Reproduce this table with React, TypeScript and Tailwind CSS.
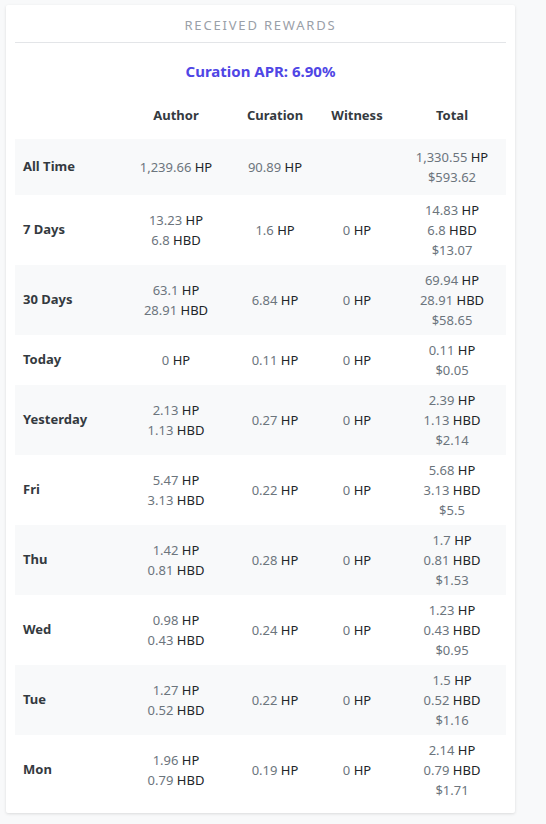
import React from "react";

type Line = { n: string; u?: string };
type Row = { label: string; author: Line[]; curation: Line[]; witness: Line[]; total: Line[]; h?: string };

const hp = (n: string): Line => ({ n, u: "HP" });
const hbd = (n: string): Line => ({ n, u: "HBD" });
const usd = (n: string): Line => ({ n });

const rows: Row[] = [
  { label: "All Time", author: [hp("1,239.66")], curation: [hp("90.89")], witness: [], total: [hp("1,330.55"), usd("$593.62")], h: "h-[56px]" },
  { label: "7 Days", author: [hp("13.23"), hbd("6.8")], curation: [hp("1.6")], witness: [hp("0")], total: [hp("14.83"), hbd("6.8"), usd("$13.07")] },
  { label: "30 Days", author: [hp("63.1"), hbd("28.91")], curation: [hp("6.84")], witness: [hp("0")], total: [hp("69.94"), hbd("28.91"), usd("$58.65")] },
  { label: "Today", author: [hp("0")], curation: [hp("0.11")], witness: [hp("0")], total: [hp("0.11"), usd("$0.05")] },
  { label: "Yesterday", author: [hp("2.13"), hbd("1.13")], curation: [hp("0.27")], witness: [hp("0")], total: [hp("2.39"), hbd("1.13"), usd("$2.14")] },
  { label: "Fri", author: [hp("5.47"), hbd("3.13")], curation: [hp("0.22")], witness: [hp("0")], total: [hp("5.68"), hbd("3.13"), usd("$5.5")] },
  { label: "Thu", author: [hp("1.42"), hbd("0.81")], curation: [hp("0.28")], witness: [hp("0")], total: [hp("1.7"), hbd("0.81"), usd("$1.53")] },
  { label: "Wed", author: [hp("0.98"), hbd("0.43")], curation: [hp("0.24")], witness: [hp("0")], total: [hp("1.23"), hbd("0.43"), usd("$0.95")] },
  { label: "Tue", author: [hp("1.27"), hbd("0.52")], curation: [hp("0.22")], witness: [hp("0")], total: [hp("1.5"), hbd("0.52"), usd("$1.16")] },
  { label: "Mon", author: [hp("1.96"), hbd("0.79")], curation: [hp("0.19")], witness: [hp("0")], total: [hp("2.14"), hbd("0.79"), usd("$1.71")] },
];

function Cell({ lines }: { lines: Line[] }) {
  return (
    <div className="flex flex-col items-center justify-center text-center">
      {lines.map((l, i) => (
        <div key={i} className="leading-[20px] whitespace-nowrap">
          <span className="text-[#6c757d]">{l.n}</span>
          {l.u && <span className="text-[#212529]"> {l.u}</span>}
        </div>
      ))}
    </div>
  );
}

export default function App() {
  return (
    <div
      className="min-h-[824px] w-[546px] bg-[#f8f9fa] pt-[5px] pl-[6px]"
      style={{ fontFamily: '"Noto Sans", "Open Sans", sans-serif' }}
    >
      <div className="w-[509px] bg-white rounded-[2px] shadow-[0_1px_3px_rgba(0,0,0,0.12)] px-[9px] pb-[8px]">
        <div className="h-[37px] flex items-center justify-center text-[13px] tracking-[0.14em] text-[#9aa0a8] pt-[4px]">
          RECEIVED REWARDS
        </div>
        <div className="h-px bg-[#e3e5e8]" />
        <div className="h-[58px] flex items-center justify-center text-[15px] font-bold text-[#4f46e5] pb-[2px]">
          Curation APR: 6.90%
        </div>
        <div className="text-[13px]">
          <div className="grid grid-cols-[104px_114px_84px_80px_110px] h-[38px] items-center font-bold text-[#343a40] pb-[8px]">
            <div />
            <div className="text-center">Author</div>
            <div className="text-center">Curation</div>
            <div className="text-center">Witness</div>
            <div className="text-center">Total</div>
          </div>
          {rows.map((r, i) => (
            <div
              key={r.label}
              className={`grid grid-cols-[104px_114px_84px_80px_110px] items-center py-[5px] ${r.h ?? ""} ${i % 2 === 0 ? "bg-[#f8f9fa]" : "bg-white"}`}
            >
              <div className="pl-[8px] font-bold text-[#343a40]">{r.label}</div>
              <Cell lines={r.author} />
              <Cell lines={r.curation} />
              <Cell lines={r.witness} />
              <Cell lines={r.total} />
            </div>
          ))}
        </div>
      </div>
    </div>
  );
}
